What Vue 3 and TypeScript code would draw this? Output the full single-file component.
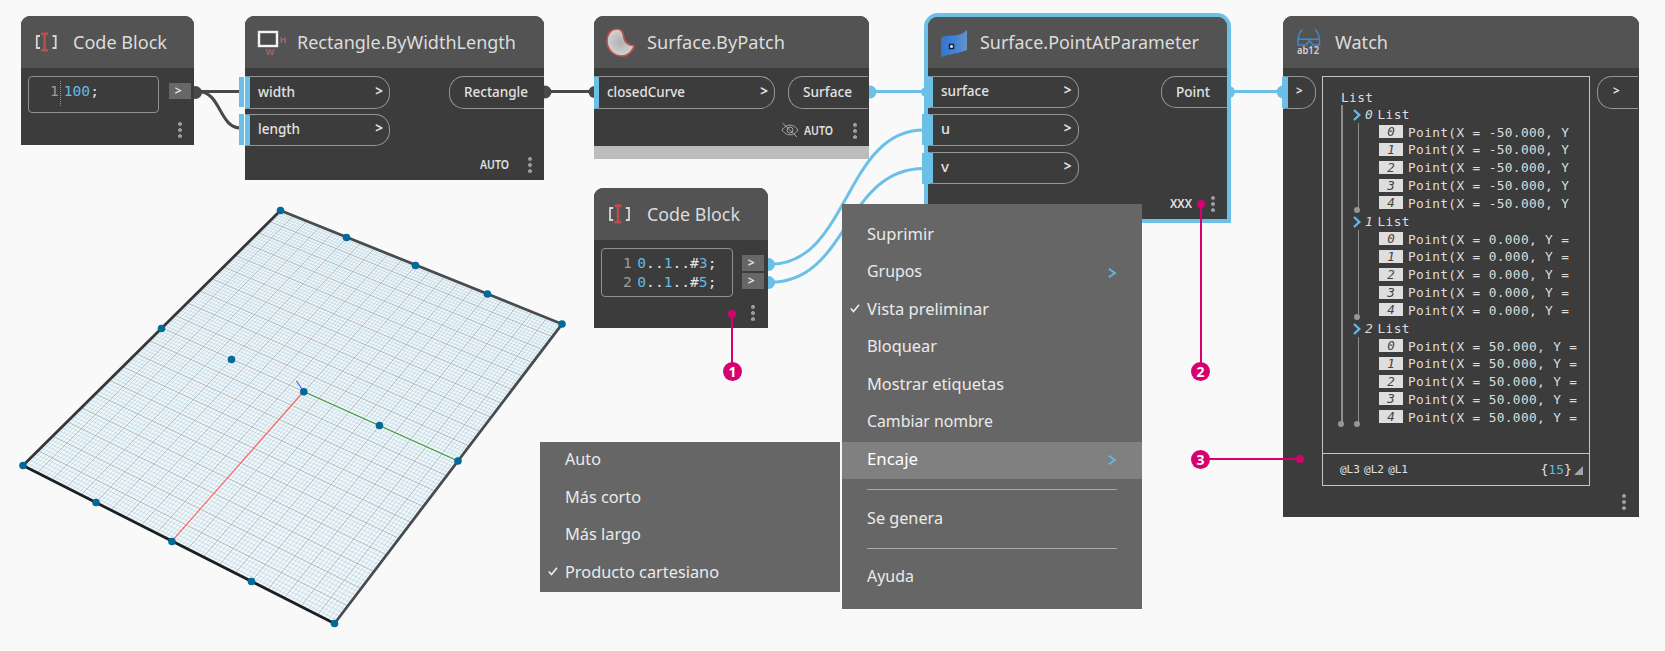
<script setup lang="ts">
import type { Directive } from 'vue'

/* Condenses a label horizontally so that it takes exactly the given width. */
const vFit: Directive<HTMLElement, number> = {
  mounted(el, { value }) {
    const natural = el.getBoundingClientRect().width
    if (!natural) return
    el.style.transform = `scaleX(${value / natural})`
    el.style.marginRight = `${value - natural}px`
  },
}

interface Entry { label: string; width: number; checked?: boolean; arrow?: boolean; active?: boolean; tall?: boolean }

const menu: Entry[] = [
  { label: 'Suprimir', width: 67 },
  { label: 'Grupos', width: 55, arrow: true },
  { label: 'Vista preliminar', width: 122, checked: true },
  { label: 'Bloquear', width: 70 },
  { label: 'Mostrar etiquetas', width: 137 },
  { label: 'Cambiar nombre', width: 126 },
  { label: 'Encaje', width: 51, arrow: true, active: true },
  { label: 'Se genera', width: 76, tall: true },
  { label: 'Ayuda', width: 47, tall: true },
]
const submenu: Entry[] = [
  { label: 'Auto', width: 36 },
  { label: 'Más corto', width: 76 },
  { label: 'Más largo', width: 76 },
  { label: 'Producto cartesiano', width: 154, checked: true },
]

const groups = ['Point(X = -50.000, Y', 'Point(X = 0.000, Y =', 'Point(X = 50.000, Y =']

type Pt = [number, number]
const A: Pt = [280.5, 210.5]
const B: Pt = [562, 324]
const C: Pt = [334.5, 623.5]
const D: Pt = [23, 465.5]

/* Perspective map from the unit square to the quad A, B, C, D. */
const sx = A[0] - B[0] + C[0] - D[0]
const sy = A[1] - B[1] + C[1] - D[1]
const dx1 = B[0] - C[0], dx2 = D[0] - C[0]
const dy1 = B[1] - C[1], dy2 = D[1] - C[1]
const det = dx1 * dy2 - dx2 * dy1
const g = (sx * dy2 - dx2 * sy) / det
const h = (dx1 * sy - sx * dy1) / det
const project = (u: number, v: number): Pt => {
  const w = g * u + h * v + 1
  return [
    ((B[0] - A[0] + g * B[0]) * u + (D[0] - A[0] + h * D[0]) * v + A[0]) / w,
    ((B[1] - A[1] + g * B[1]) * u + (D[1] - A[1] + h * D[1]) * v + A[1]) / w,
  ]
}
const segment = (u0: number, v0: number, u1: number, v1: number) => {
  const [a, b] = project(u0, v0)
  const [c, d] = project(u1, v1)
  return `M${a.toFixed(2)} ${b.toFixed(2)}L${c.toFixed(2)} ${d.toFixed(2)}`
}
const lines = (n: number, skip = 0) => {
  let d = ''
  for (let i = 1; i < n; i++) {
    if (skip && i % skip === 0) continue
    d += segment(i / n, 0, i / n, 1) + segment(0, i / n, 1, i / n)
  }
  return d
}
const minor = lines(100, 5)
const major = lines(20)
const points: Pt[] = [
  A, [346.5, 237.5], [415.5, 265.5], [487.5, 294], B,
  [161.5, 328.5], [231.5, 359.5], [303.8, 391.7], [379.5, 425.5], [458, 461],
  D, [96, 502.5], [172, 541.5], [251.5, 581.5], C,
]
</script>

<template>
  <main class="canvas">
    <svg class="layer" width="1665" height="651" viewBox="0 0 1665 651">
      <path d="M280.5 210.5L562 324L334.5 623.5L23 465.5Z" fill="#f2f7f9" />
      <path :d="minor" stroke="#a9cbdc" stroke-width=".5" fill="none" />
      <path :d="major" stroke="#8f9ea5" stroke-opacity=".68" stroke-width=".95" fill="none" />
      <g fill="none" stroke-width="2.8">
        <path d="M280.5 210.5L562 324L334.5 623.5" stroke="#484c50" />
        <path d="M280.5 210.5L23 465.5" stroke="#33373a" />
        <path d="M23 465.5L334.5 623.5" stroke="#1c1f21" />
      </g>
      <path d="M303.5 391.5L172 541" stroke="#ff6b6b" stroke-width="1.2" />
      <path d="M303.5 391.5L458 461" stroke="#3fa03f" stroke-width="1.1" />
      <path d="M303.5 391.5L296.5 381" stroke="#5a5af5" stroke-width="1.2" />
      <circle v-for="(p, i) in points" :key="i" :cx="p[0]" :cy="p[1]" r="3.8" fill="#016a99" />

      <g fill="none" stroke="#484848" stroke-width="3">
        <path d="M198 91.5H240M200 92C220 92 220 128 240 128M546 91.5H594" />
      </g>
      <g fill="#484848">
        <circle cx="195.5" cy="92.5" r="6.5" /><circle cx="545" cy="92" r="6.5" /><circle cx="594.5" cy="92" r="6" />
      </g>
      <g fill="none" stroke="#6ac0e7" stroke-width="3">
        <path d="M870 91.5H928M1230 91.5H1285" />
        <path d="M770 264.3C849 264.3 844 130 924 130M770 282.3C849 282.3 844 168.5 924 168.5" />
      </g>
      <g fill="#6ac0e7">
        <circle cx="870" cy="92" r="6.5" /><circle cx="926" cy="92" r="5" /><circle cx="1229" cy="92" r="6" />
        <circle cx="1283" cy="92" r="6.5" /><circle cx="768.5" cy="264.5" r="6.5" /><circle cx="768.5" cy="282.5" r="6.5" />
      </g>
    </svg>

    <section class="node code-a">
      <header class="head">
        <svg class="icon" viewBox="0 0 30 30"><path d="M12 9H8.800V21H12M24.500 9H27.700V21H24.500" fill="none" stroke="#d5d5d5" stroke-width="1.8" /><path d="M13 6.8H20M13 23.2H20M16.500 6V24" stroke="#c14d4a" stroke-width="2.4" /></svg>
        <h2><span v-fit="94" class="fit">Code Block</span></h2>
      </header>
      <div class="code-row">
        <div class="editor single">
          <span class="num">1</span><i class="gutter"></i><code><b>100</b>;</code>
        </div>
        <div class="buttons"><span class="btn">&gt;</span></div>
      </div>
      <footer class="foot"><i class="dots"></i></footer>
    </section>

    <section class="node rect">
      <header class="head">
        <svg class="icon" viewBox="0 0 30 30"><rect x="5" y="5" width="18" height="14" fill="#4b4b4b" stroke="#f4f4f4" stroke-width="2.4" /><text x="25.500" y="15.500" class="tiny">H</text><text x="11.500" y="28" class="tiny">W</text></svg>
        <h2><span v-fit="219" class="fit">Rectangle.ByWidthLength</span></h2>
      </header>
      <div class="ports">
        <div class="col">
          <div class="in wide-a"><span v-fit="37" class="fit">width</span><em>&gt;</em></div>
          <div class="in wide-a"><span v-fit="42" class="fit">length</span><em>&gt;</em></div>
        </div>
        <div class="out"><span v-fit="64" class="fit">Rectangle</span></div>
      </div>
      <footer class="foot"><span v-fit="29" class="fit lacing">AUTO</span><i class="dots"></i></footer>
    </section>

    <section class="node patch">
      <header class="head">
        <svg class="icon" viewBox="0 0 30 30">
          <defs><radialGradient id="blob"><stop offset="0" stop-color="#b0b0b0" /><stop offset="1" stop-color="#d2d2d2" /></radialGradient></defs>
          <path d="M12 2C18 2 18 7 19 11C20 16 23 18 29 18.500C29 22 24 29 17 29C8 29 2 22 2 14C2 7 6 2 12 2Z" fill="url(#blob)" stroke="#b9514f" stroke-width="1.7" />
        </svg>
        <h2><span v-fit="138" class="fit">Surface.ByPatch</span></h2>
      </header>
      <div class="ports">
        <div class="col"><div class="in wide-b"><span v-fit="78" class="fit">closedCurve</span><em>&gt;</em></div></div>
        <div class="out"><span v-fit="49" class="fit">Surface</span></div>
      </div>
      <footer class="foot">
        <svg class="eye" viewBox="0 0 18 16" fill="none" stroke="#a2a2a2"><path d="M1 8C5 1.500 13 1.500 17 8C13 14.500 5 14.500 1 8Z" /><circle cx="9" cy="8" r="3" /><path d="M1.500 1L16 15" /></svg>
        <span v-fit="29" class="fit lacing">AUTO</span><i class="dots"></i>
      </footer>
      <div class="strip"></div>
    </section>

    <section class="node code-b">
      <header class="head">
        <svg class="icon" viewBox="0 0 30 30"><path d="M8.200 9H5V21H8.200M20.800 9H24V21H20.800" fill="none" stroke="#d5d5d5" stroke-width="1.8" /><path d="M9.500 6.800H16.500M9.500 23.200H16.500M13 6V24" stroke="#c14d4a" stroke-width="2.4" /></svg>
        <h2><span v-fit="93" class="fit">Code Block</span></h2>
      </header>
      <div class="code-row">
        <div class="editor double">
          <div><span class="num">1</span><code><b>0</b>..<b>1</b>..#<b>3</b>;</code></div>
          <div><span class="num">2</span><code><b>0</b>..<b>1</b>..#<b>5</b>;</code></div>
        </div>
        <div class="buttons"><span class="btn">&gt;</span><span class="btn">&gt;</span></div>
      </div>
      <footer class="foot"><i class="dots"></i></footer>
    </section>

    <section class="node param">
      <header class="head">
        <svg class="icon" viewBox="0 0 30 30">
          <defs><linearGradient id="flag"><stop offset="0" stop-color="#3575cf" /><stop offset=".5" stop-color="#3f82d6" /><stop offset="1" stop-color="#6493c8" /></linearGradient></defs>
          <path d="M2 9C8 4 19 10 28 1V21C21 24 11 25 2 28Z" fill="url(#flag)" /><rect x="10.500" y="15.500" width="4" height="4" fill="#fff" stroke="#14233a" stroke-width="1.500" />
        </svg>
        <h2><span v-fit="219" class="fit">Surface.PointAtParameter</span></h2>
      </header>
      <div class="ports">
        <div class="col">
          <div class="in wide-c"><span v-fit="48" class="fit">surface</span><em>&gt;</em></div>
          <div class="in wide-c"><span v-fit="9" class="fit">u</span><em>&gt;</em></div>
          <div class="in wide-c"><span v-fit="8" class="fit">v</span><em>&gt;</em></div>
        </div>
        <div class="out"><span v-fit="34" class="fit">Point</span></div>
      </div>
      <footer class="foot"><span v-fit="22" class="fit lacing">XXX</span><i class="dots"></i></footer>
    </section>

    <section class="node watch">
      <header class="head">
        <svg class="icon" viewBox="0 0 30 30"><g fill="none" stroke="#4088cc" stroke-width="1.500"><path d="M8.500 3C6 3.500 5 7 4 12V18H12L15.500 13.500L19 18H25.500V12C24.500 7 23.500 3.500 21 3M4 12.300H25.500" /></g><text x="3" y="26.500" class="ab" textLength="22" lengthAdjust="spacingAndGlyphs">ab12</text></svg>
        <h2><span v-fit="53" class="fit">Watch</span></h2>
      </header>
      <div class="watch-body">
        <div class="in stub"><em>&gt;</em></div>
        <div class="panel">
          <div class="tree">
            <div class="row">List</div>
            <div class="branch">
              <template v-for="(text, n) in groups" :key="n">
                <div class="row group-head">
                  <svg width="8" height="12" viewBox="0 0 8 12"><path d="M1 1L6.300 6L1 11" fill="none" stroke="#61b9e4" stroke-width="2.400" /></svg>
                  <i>{{ n }}</i><span>List</span>
                </div>
                <div class="leaves">
                  <div v-for="k in 5" :key="k" class="row leaf"><i>{{ k - 1 }}</i><span>{{ text }}</span></div>
                </div>
              </template>
            </div>
          </div>
          <div class="levels">
            <span>@L3</span><span>@L2</span><span>@L1</span>
            <strong>{<b>15</b>}</strong>
            <svg width="9" height="9" viewBox="0 0 9 9"><path d="M9 0V9H0Z" fill="#a5a5a5" /></svg>
          </div>
        </div>
        <div class="out stub-out"><em>&gt;</em></div>
      </div>
      <footer class="foot"><i class="dots"></i></footer>
    </section>

    <nav class="menu main">
      <div v-for="m in menu" :key="m.label" class="item" :class="{ active: m.active, tall: m.tall }">
        <svg v-if="m.checked" class="check" viewBox="0 0 10 9"><path d="M.8 4.500L3.500 7.500L9 .8" fill="none" stroke="#f1f1f1" stroke-width="1.500" /></svg>
        <i v-else class="check"></i>
        <span v-fit="m.width" class="fit">{{ m.label }}</span>
        <svg v-if="m.arrow" class="arrow" viewBox="0 0 8 10"><path d="M.8 .8L7 5L.8 9.200" fill="none" stroke="#60b7e2" stroke-width="1.900" /></svg>
      </div>
    </nav>
    <nav class="menu sub">
      <div v-for="m in submenu" :key="m.label" class="item">
        <svg v-if="m.checked" class="check" viewBox="0 0 10 9"><path d="M.8 4.500L3.500 7.500L9 .8" fill="none" stroke="#f1f1f1" stroke-width="1.500" /></svg>
        <i v-else class="check"></i>
        <span v-fit="m.width" class="fit">{{ m.label }}</span>
      </div>
    </nav>

    <svg class="layer" width="1665" height="651" viewBox="0 0 1665 651">
      <g fill="#6ac0e7">
        <rect x="239" y="77" width="5" height="30" /><rect x="239" y="114" width="5" height="31" />
        <rect x="924" y="77" width="6" height="31" /><rect x="922" y="114" width="8" height="31" /><rect x="922" y="153" width="8" height="31" />
        <rect x="1282" y="77" width="2" height="31" />
      </g>
      <path d="M244.500 76V146" stroke="#f9f9f9" />
      <g stroke="#d6006e" stroke-width="2"><path d="M732 314V365M1201 204V365M1205 459H1300" /></g>
      <g fill="#d6006e">
        <circle cx="732" cy="314" r="4" /><circle cx="1201" cy="204" r="4" /><circle cx="1300" cy="459" r="4" />
        <circle cx="732.500" cy="371.500" r="9.500" /><circle cx="1200.500" cy="371.500" r="9.500" /><circle cx="1200.500" cy="459.500" r="9.500" />
      </g>
      <g class="badge"><text x="732.500" y="376.500">1</text><text x="1200.500" y="376.500">2</text><text x="1200.500" y="464.500">3</text></g>
    </svg>
  </main>
</template>

<style>
body { margin: 0; background: #f9f9f9; }
</style>

<style scoped>
.canvas { position: relative; width: 1665px; height: 651px; overflow: hidden; background: #f9f9f9; font-family: "Noto Sans", "Open Sans", sans-serif; color: #e2e2e2; }
.canvas * { box-sizing: border-box; }
.layer { position: absolute; left: 0; top: 0; pointer-events: none; }
.fit { display: inline-block; white-space: pre; transform-origin: left center; }
.node { position: absolute; display: flex; flex-direction: column; background: #3c3c3c; border-radius: 9px 9px 0 0; }
.code-a { left: 21px; top: 16px; width: 173px; height: 129px; }
.rect { left: 245px; top: 16px; width: 299px; height: 164px; }
.patch { left: 594px; top: 16px; width: 275px; height: 143px; }
.code-b { left: 594px; top: 188px; width: 174px; height: 140px; }
.param { left: 924px; top: 13px; width: 307px; height: 210px; border: 4.500px solid #6ac0e7; border-radius: 14px 14px 0 0; }
.watch { left: 1283px; top: 16px; width: 356px; height: 501px; }

.head { display: flex; align-items: center; flex: none; height: 52px; padding-left: 11px; background: #535353; border-radius: 9px 9px 0 0; }
.param .head { height: 50.500px; }
.icon { width: 30px; height: 30px; flex: none; overflow: visible; }
.code-a .head { padding-left: 7px; }
.code-a h2 { margin-left: 15px; }
.rect .head { padding-left: 9px; }
.rect h2 { margin-left: 13px; }
.patch h2 { margin-left: 11.500px; }
.code-b h2 { margin-left: 11.500px; }
.param .icon { margin-top: 4px; }
.param h2 { margin-left: 11px; }
.watch h2 { margin-left: 10.500px; }
h2 { margin: 0 0 0 10px; font-size: 18.500px; font-weight: 400; line-height: 26px; color: #dcdcdc; }
.tiny { font: 700 9px "Noto Sans", sans-serif; fill: #ad605f; }
.ab { font: 600 11px "Noto Sans", sans-serif; fill: #d2d2d2; }

.ports { display: flex; justify-content: space-between; align-items: flex-start; padding-top: 8px; }
.col { display: flex; flex-direction: column; gap: 5px; }
.in, .out { display: flex; align-items: center; height: 32.500px; border: 1px solid #969696; padding-bottom: 2px; font-size: 14.500px; font-weight: 500; line-height: 20px; }
.in { justify-content: space-between; padding: 0 6px 3px 8px; border-left: 5px solid #6ac0e7; border-radius: 0 15px 15px 0; }
.out { padding-left: 14px; border-right: 0; border-radius: 15px 0 0 15px; }
em { font-style: normal; font-weight: 700; line-height: 20px; }
.in em { font-size: 13.500px; }
.wide-a { width: 145px; }
.wide-b { width: 181px; }
.wide-c { width: 150.500px; }
.rect .out { width: 95px; }
.patch .out { width: 80px; margin-right: 1px; }
.param .out { width: 66px; }
.rect .col, .param .col { gap: 5px; }
.param .col { gap: 5.500px; }

.foot { display: flex; align-items: center; justify-content: flex-end; margin-top: auto; height: 30px; padding: 0 12px 0 0; }
.lacing { font-size: 11.800px; font-weight: 600; line-height: 16px; margin-top: -2px; }
.dots { width: 4px; height: 16px; margin-left: 19.500px; background: radial-gradient(circle at 2px 2px, #9c9c9c 1.700px, transparent 2.200px) 0 0 / 4px 6.100px repeat-y; }
.patch .foot { padding-bottom: 1px; }
.patch .dots { margin-left: 20.500px; }
.eye { width: 18px; height: 16px; margin: -1px 5px 0 0; }
.strip { height: 13px; flex: none; background: #bcbcbc; }

.code-row { display: flex; align-items: flex-start; justify-content: space-between; padding: 8px 3px 0 7px; }
.editor { border: 1px solid #8f8f8f; border-radius: 4px; font: 14.600px/19px "DejaVu Sans Mono", "Liberation Mono", monospace; }
.editor code { font: inherit; color: #e4e4e4; }
.editor b, strong b { font-weight: 400; color: #64b8e2; }
.num { color: #9c9c9c; }
.single { display: flex; width: 131px; height: 37px; padding: 4px 0 0 21px; }
.single .num { line-height: 20px; }
.single code { line-height: 20px; padding-left: 2.500px; }
.gutter { height: 25px; margin-left: 1.500px; border-left: 1px dotted #909090; }
.double { width: 132px; height: 49px; padding: 4px 0 0 21px; }
.double code { padding-left: 5.500px; }
.buttons { display: flex; flex-direction: column; gap: 2px; padding-top: 7px; }
.code-b .code-row { padding-right: 4px; }
.code-b .foot { padding-right: 13px; }
.btn { width: 22.500px; height: 16px; background: #676767; font-size: 12px; font-weight: 700; line-height: 15px; text-align: center; padding-right: 3px; }

.watch-body { display: flex; align-items: flex-start; padding-top: 8px; }
.stub { width: 33px; padding-left: 8px; }
.stub em, .stub-out em { font-size: 11.500px; }
.stub-out { width: 41px; margin-left: 7px; padding-left: 15px; }
.panel { display: flex; flex-direction: column; width: 268px; height: 410px; margin-left: 6px; border: 1px solid #c4c4c4; }
.tree { flex: 1; padding: 11.500px 0 0 18px; font: 12.800px/17.830px "DejaVu Sans Mono", "Liberation Mono", monospace; letter-spacing: .36px; color: #dedede; overflow: hidden; }
.row { display: flex; align-items: center; height: 17.830px; white-space: pre; }
.row span { margin-top: -1px; }
.branch, .leaves { position: relative; }
.branch::before, .leaves::before { content: ""; position: absolute; left: 0; top: -1px; bottom: 4px; width: 1.500px; background: #8d8d8d; }
.branch::after, .leaves::after { content: ""; position: absolute; left: -3px; bottom: .500px; width: 6px; height: 6px; border-radius: 50%; background: #969696; }
.branch { padding-left: 11.500px; }
.group-head svg { margin-top: -1px; }
.group-head i { width: 9px; margin: -1px 3.500px 0 4.500px; font-style: italic; }
.leaves { margin-left: 5px; padding-left: 21.500px; }
.leaves::after { left: -4px; }
.leaf i { width: 24px; height: 13px; margin: -3px 5px 0 0; background: #dedede; color: #444; font-size: 12.500px; letter-spacing: 0; line-height: 13px; text-align: center; }
.levels { display: flex; align-items: center; gap: 4.200px; height: 32px; flex: none; padding: 1px 6px 0 17px; border-top: 1px solid #c4c4c4; font: 11px/16px "DejaVu Sans Mono", "Liberation Mono", monospace; }
.levels strong { margin-left: auto; font-weight: 400; font-size: 13px; }
.levels svg { margin-left: -2px; }
.watch .foot { padding-right: 13px; }

.menu { position: absolute; display: flex; flex-direction: column; width: 300px; background: #666; color: #ebebeb; font-size: 16.300px; }
.main { left: 842px; top: 204px; height: 405px; padding-top: 12.500px; }
.sub { left: 540px; top: 442px; height: 150px; }
.item { display: flex; align-items: center; flex: none; height: 37.500px; padding-left: 8px; line-height: 24px; }
.item .fit { margin-top: -3.500px; margin-left: -.3px; }
.check { flex: none; width: 10px; height: 9px; margin-right: 7px; margin-top: -3px; }
.arrow { width: 8px; height: 10px; margin-left: auto; margin-right: 26px; margin-top: -.5px; }
.active { background: #808080; color: #fff; }
.tall { position: relative; height: 59px; padding-top: 22px; }
.tall + .tall { padding-top: 20px; }
.tall::before { content: ""; position: absolute; left: 25px; right: 25px; top: 10px; height: 1px; background: #acacac; }
.badge { font: 700 14px "Noto Sans", sans-serif; fill: #fff; text-anchor: middle; }
</style>
